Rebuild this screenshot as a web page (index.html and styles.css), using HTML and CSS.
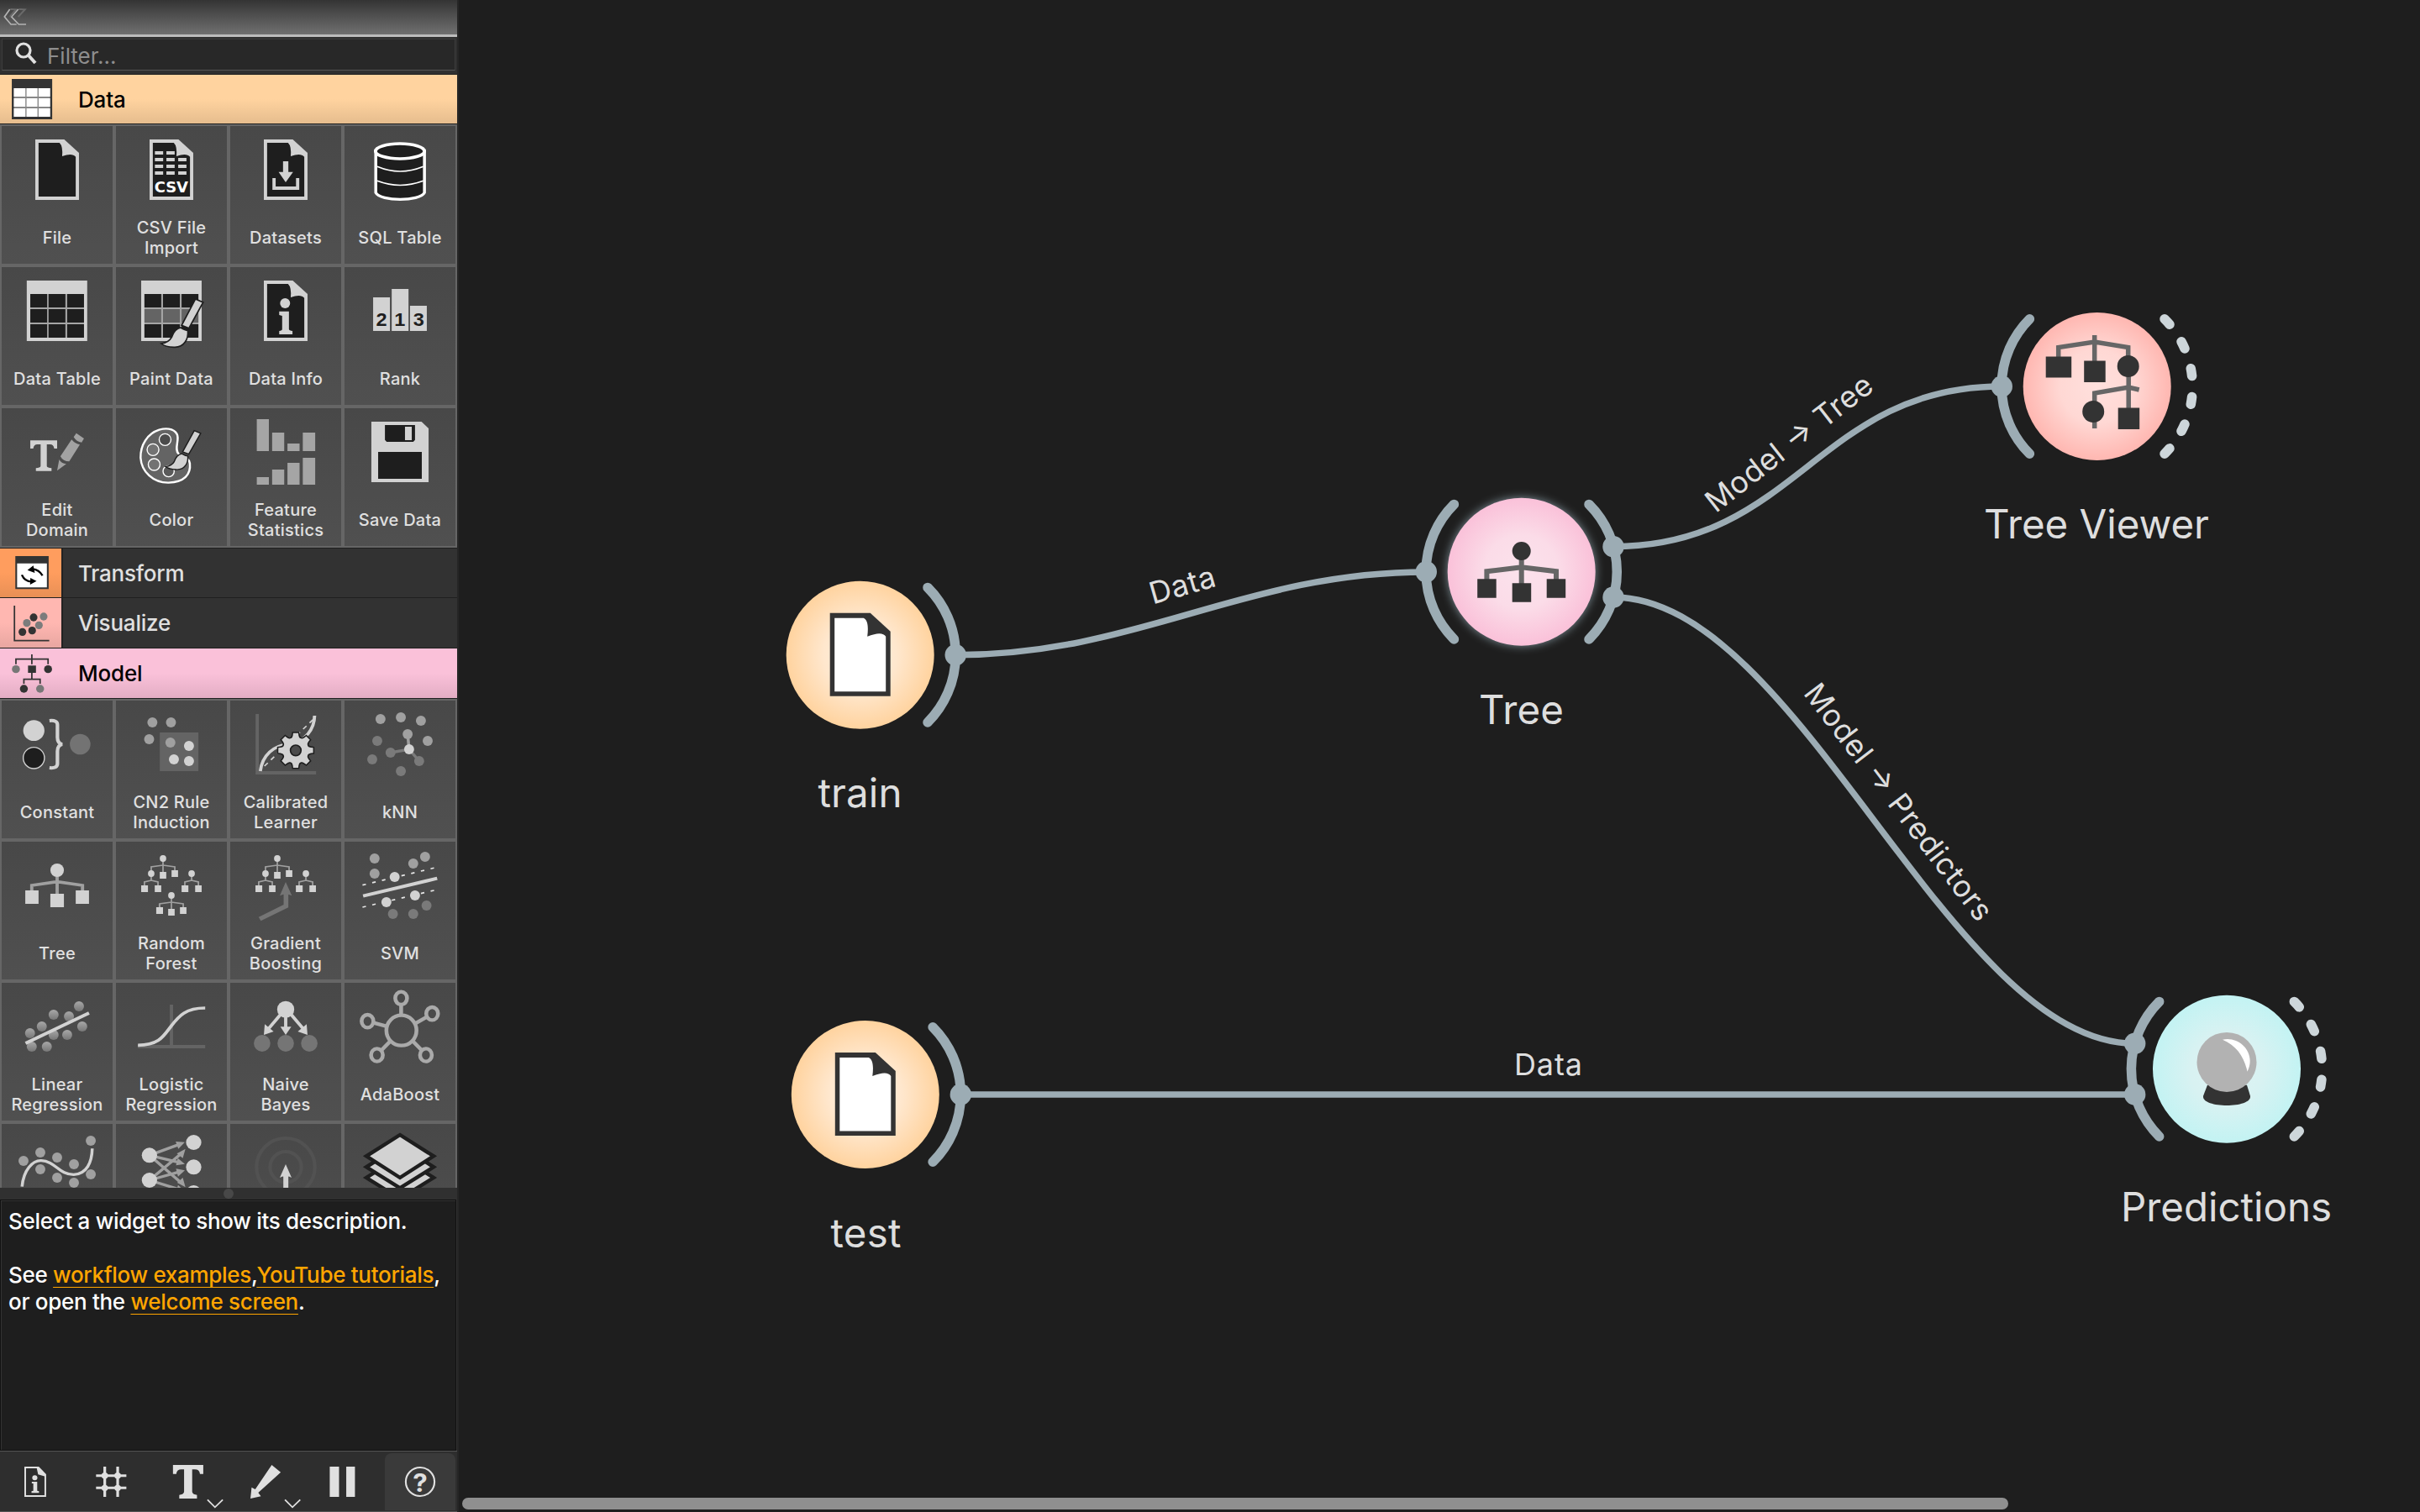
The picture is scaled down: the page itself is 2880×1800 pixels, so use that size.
FILE: index.html
```html
<!DOCTYPE html>
<html lang="en">
<head>
<meta charset="utf-8">
<title>Workflow</title>
<link rel="stylesheet" href="styles.css">
</head>
<body>
<svg class="defs" width="0" height="0">
  <defs>
    <g id="doc"><path class="lt" d="M120 48H218L268 96V264H120Z"/><path class="dk" d="M131 60H202Q214 72 211 108Q245 95 257 110V252H131Z"/></g>
    <g id="brush"><path class="lt ol" d="M663 138L689 150L641 242L616 232Z"/><path class="lt ol" d="M613 240Q628 250 637 250C640 280 625 312 590 310Q560 309 547 297Q572 294 582 275Q592 244 613 240Z"/></g>
    <g id="minitree"><path class="wire" d="M553 72V116M513 112V96L553 90L593 96V110"/><ellipse class="lt" cx="553" cy="66" rx="11" ry="12"/><path class="lt" d="M542 114h22v24h-22zM582 108h22v24h-22z"/></g>
    <g id="twig"><path class="wire" d="M513 128V145M490 164V150L513 144L536 150V164"/><ellipse class="lt" cx="513" cy="120" rx="11" ry="12"/><path class="lt" d="M479 162h23v24h-23zM525 162h22v24h-22z"/></g>
    <path id="tooth" d="M-20 -38C-12 -44 -10 -50 -9 -62H9C10 -50 12 -44 20 -38Z"/>
    <path id="slab" d="M577 1032H678V1064H667Q665 1048 650 1048H641V1128Q642 1137 657 1139V1152H598V1139Q613 1137 614 1128V1048H605Q590 1048 588 1064H577Z"/>
    <linearGradient id="dot" x2="0" y2="1"><stop offset="0" stop-color="#a8a8a8"/><stop offset="1" stop-color="#777"/></linearGradient>
  </defs>
</svg>
<div class="app">
<aside class="dock">
  <header class="dock-title"><svg width="40" height="41" viewBox="0 0 114 123"><path d="M32 33L13 60L36 87H56M62 33L38 60L64 87H90" fill="none" stroke="#b4b4b4" stroke-width="5"/><path d="M34 33L54 34L32 60M64 33L86 34L62 60" fill="none" stroke="#6a6a6a" stroke-width="6"/></svg></header>
  <div class="filter-wrap"><div class="filter"><svg width="30" height="30" viewBox="0 0 30 30"><circle cx="12" cy="12" r="8" fill="none" stroke="#e0e0e0" stroke-width="3.2"/><path d="M17.500 17.500L26 27" stroke="#e0e0e0" stroke-width="4"/></svg><span>Filter...</span></div></div>

  <div class="tab open data"><svg class="tab-icon" viewBox="0 267 208 174" preserveAspectRatio="none"><path fill="#333" d="M40 282h137v144h-137z"/><path fill="#888" d="M47 315h123v102h-123z"/><path fill="#fff" d="M47 315h39v30h-39zM90 315h37v30h-37zM131 315h39v30h-39zM47 351h39v30h-39zM90 351h37v30h-37zM131 351h39v30h-39zM47 387h39v30h-39zM90 387h37v30h-37zM131 387h39v30h-39z"/></svg><span>Data</span></div>
  <div class="grid first">
    <div class="tile"><svg viewBox="6 0 376 318" preserveAspectRatio="none"><use href="#doc"/></svg><span>File</span></div>
    <div class="tile"><svg viewBox="6 0 376 318" preserveAspectRatio="none"><use href="#doc"/><path class="lt" d="M138 90h28v12h-28zM177 90h28v12h-28zM138 114h28v12h-28zM177 114h28v12h-28zM217 114h28v12h-28zM138 138h28v12h-28zM177 138h28v12h-28zM217 138h28v12h-28zM138 162h28v12h-28zM177 162h28v12h-28zM217 162h28v12h-28z"/><text class="csv" x="136" y="238" textLength="115" lengthAdjust="spacingAndGlyphs">CSV</text></svg><span>CSV File<br>Import</span></div>
    <div class="tile"><svg viewBox="6 0 376 318" preserveAspectRatio="none"><use href="#doc"/><path class="lt" d="M185 126h18v38h16L194 201L170 164h15zM149 186h11v30h69v-30h11v42h-91z"/></svg><span>Datasets</span></div>
    <div class="tile"><svg viewBox="1169 450 376 318" preserveAspectRatio="none"><path class="dk" d="M1275 540V688C1290 720 1425 720 1440 688V540Z" stroke="#fff" stroke-width="10"/><ellipse class="dk" cx="1357" cy="540" rx="83" ry="27" stroke="#fff" stroke-width="11"/><path d="M1280 595Q1357 629 1436 595M1280 646Q1357 677 1436 646" fill="none" stroke="#fff" stroke-width="5"/></svg><span>SQL Table</span></div>

    <div class="tile"><svg viewBox="6 24 376 318" preserveAspectRatio="none"><path class="lt" d="M91 72h205v216h-205z"/><path fill="#a5a5a5" d="M103 120h182v156h-182z"/><path class="dk" d="M103 120h57v48h-57zM165 120h57v48h-57zM228 120h57v48h-57zM103 174h57v48h-57zM165 174h57v48h-57zM228 174h57v48h-57zM103 228h57v48h-57zM165 228h57v48h-57zM228 228h57v48h-57z"/></svg><span>Data Table</span></div>
    <div class="tile"><svg viewBox="393.500 24 376 318" preserveAspectRatio="none"><path class="lt" d="M479 72h205v216h-205z"/><path fill="#a5a5a5" d="M490 120h183v156h-183z"/><path class="dk" d="M490 120h57v48h-57zM553 120h57v48h-57zM616 120h57v48h-57zM490 228h57v48h-57zM553 228h57v48h-57zM616 228h57v48h-57z"/><path fill="#646464" d="M490 174h57v48h-57zM553 174h57v48h-57zM616 174h57v48h-57z"/><use href="#brush"/></svg><span>Paint Data</span></div>
    <div class="tile"><svg viewBox="6 0 376 318" preserveAspectRatio="none"><use href="#doc"/><ellipse class="lt" cx="192" cy="129" rx="17" ry="18"/><path class="lt" d="M172 158H205V221Q206 227 217 228V240H172V228Q182 227 182 221V174L172 171Z"/></svg><span>Data Info</span></div>
    <div class="tile"><svg viewBox="1169 24 376 318" preserveAspectRatio="none"><path class="lt" d="M1266 132h57v120h-57zM1329 102h57v150h-57zM1391 162h57v90h-57z"/><text class="rank" x="1276" y="234">2</text><text class="rank" x="1338" y="234">1</text><text class="rank" x="1402" y="234">3</text></svg><span>Rank</span></div>

    <div class="tile"><svg viewBox="6 528 376 318" preserveAspectRatio="none"><path class="lt" d="M103 643H194V672H184Q182 657 170 657H159V735Q161 741 175 742V752H122V742Q136 741 138 735V657H127Q115 657 113 672H103Z"/><path fill="#a2a2a2" d="M243 640Q255 655 271 658L235 718Q214 718 205 700ZM259 617L285 636L277 650Q260 648 250 631ZM201 711Q208 726 225 727L194 751Z"/></svg><span>Edit<br>Domain</span></div>
    <div class="tile"><svg viewBox="393.500 528 376 318" preserveAspectRatio="none"><path fill="#646464" stroke="#fff" stroke-width="7" d="M607 692C588 675 611 640 600 620C588 598 560 599 540 605C500 618 476 660 477 705C480 755 520 795 572 794C625 792 648 765 644 725C642 705 622 702 607 692Z"/><g fill="#737373" stroke="#fff" stroke-width="4"><ellipse cx="560" cy="640" rx="20" ry="21" fill="#4b4b4b"/><ellipse cx="519" cy="676" rx="20" ry="21"/><ellipse cx="523" cy="729" rx="20" ry="21"/><ellipse cx="572" cy="753" rx="19" ry="20" fill="#5a5a5a"/></g><use href="#brush" transform="translate(102 496) scale(.84 .81)"/></svg><span>Color</span></div>
    <div class="tile"><svg viewBox="781 528 376 318" preserveAspectRatio="none"><path fill="#a5a5a5" d="M871 567h41v114h-41zM923 615h41v66h-41zM975 654h41v27h-41zM1027 615h42v66h-42zM871 774h41v27h-41zM923 747h41v54h-41zM975 723h41v78h-41zM1027 705h42v96h-42z"/></svg><span>Feature<br>Statistics</span></div>
    <div class="tile"><svg viewBox="1169 528 376 318" preserveAspectRatio="none"><path class="lt" d="M1260 576H1430L1454 600V792H1260Z"/><path class="dk" d="M1306 588H1408V641L1402 648H1312L1306 641ZM1283 684h148v96h-148z"/><path class="lt" d="M1374 594h23v48h-23z"/></svg><span>Save Data</span></div>
  </div>

  <div class="tab"><svg class="tab-icon transform" viewBox="0 40 208 174" preserveAspectRatio="none"><path fill="#333" d="M52 67h113v118H52z"/><path fill="#fff" d="M58 93h101v86H58z"/><path d="M144 137Q133 115 110 113M74 134Q84 158 107 158" fill="none" stroke="#000" stroke-width="7"/><path d="M93 117L113 101L118 127ZM124 156L102 169L103 145Z"/></svg><span>Transform</span></div>
  <div class="tab tall"><svg class="tab-icon visualize" viewBox="0 216 208 177" preserveAspectRatio="none"><path d="M49 243V368H167" fill="none" stroke="#333" stroke-width="5"/><g fill="#333"><ellipse cx="114" cy="285" rx="13" ry="14"/><ellipse cx="76" cy="337" rx="13" ry="14"/><ellipse cx="109" cy="332" rx="13" ry="14"/></g><g fill="#7c7c7c"><ellipse cx="148" cy="282" rx="13" ry="14"/><ellipse cx="91" cy="305" rx="13" ry="14"/><ellipse cx="132" cy="313" rx="13" ry="14"/></g></svg><span>Visualize</span></div>
  <div class="tab open model"><svg class="tab-icon" viewBox="0 396 208 177" preserveAspectRatio="none"><path d="M54 452V434H163V452M108 417V452M108 482V506M81 522V506H136V522" fill="none" stroke="#333" stroke-width="5"/><path fill="#333" d="M95 457h27v26H95z"/><g fill="#333"><ellipse cx="163" cy="470" rx="13.500" ry="14"/><ellipse cx="81" cy="540" rx="13.500" ry="14"/></g><g fill="#777"><ellipse cx="54" cy="470" rx="13.500" ry="14"/><ellipse cx="136" cy="540" rx="13.500" ry="14"/></g></svg><span>Model</span></div>
  <div class="grid clipped">
    <div class="tile"><svg viewBox="6 582 376 318" preserveAspectRatio="none"><ellipse class="lt" cx="115" cy="689" rx="36" ry="37"/><ellipse class="dk" cx="115" cy="787" rx="36" ry="38" stroke="#d2d2d2" stroke-width="4"/><path fill="none" stroke="#d2d2d2" stroke-width="12" d="M168 654Q195 651 195 668V713Q195 734 211 738Q195 742 195 763V807Q195 825 168 822"/><ellipse fill="#737373" cx="272" cy="738" rx="35" ry="37"/></svg><span>Constant</span></div>
    <div class="tile"><svg viewBox="393.500 582 376 318" preserveAspectRatio="none"><path fill="#646464" d="M542 696h131v138H542z"/><g fill="#a0a0a0"><ellipse cx="517" cy="660" rx="17" ry="18"/><ellipse cx="580" cy="660" rx="17" ry="18"/><ellipse cx="506" cy="720" rx="17" ry="18"/><ellipse cx="578" cy="732" rx="17" ry="18"/></g><g class="lt"><ellipse cx="641" cy="744" rx="17" ry="18"/><ellipse cx="590" cy="792" rx="17" ry="18"/><ellipse cx="641" cy="798" rx="17" ry="18"/></g></svg><span>CN2 Rule<br>Induction</span></div>
    <div class="tile"><svg viewBox="781 582 376 318" preserveAspectRatio="none"><path fill="#646464" d="M867 630H878V834H1072V846H867Z"/><path d="M897 816L1062 650" fill="none" stroke="#d2d2d2" stroke-width="5" stroke-dasharray="16 15"/><path d="M883 834C890 775 930 743 975 738C1040 730 1066 680 1067 636" fill="none" stroke="#d2d2d2" stroke-width="11"/><g transform="translate(1003 760) scale(.95 1)"><g fill="#1e1e1e" stroke="#1e1e1e" stroke-width="9"><circle r="46"/><use href="#tooth"/><use href="#tooth" transform="rotate(45)"/><use href="#tooth" transform="rotate(90)"/><use href="#tooth" transform="rotate(135)"/><use href="#tooth" transform="rotate(180)"/><use href="#tooth" transform="rotate(225)"/><use href="#tooth" transform="rotate(270)"/><use href="#tooth" transform="rotate(315)"/></g><g class="lt"><circle r="46"/><use href="#tooth"/><use href="#tooth" transform="rotate(45)"/><use href="#tooth" transform="rotate(90)"/><use href="#tooth" transform="rotate(135)"/><use href="#tooth" transform="rotate(180)"/><use href="#tooth" transform="rotate(225)"/><use href="#tooth" transform="rotate(270)"/><use href="#tooth" transform="rotate(315)"/></g><circle r="19" fill="#4b4b4b" stroke="#1e1e1e" stroke-width="5"/></g></svg><span>Calibrated<br>Learner</span></div>
    <div class="tile"><svg viewBox="1169 582 376 318" preserveAspectRatio="none"><path d="M1325 768L1388 756L1422 798" fill="none" stroke="#7a7a7a" stroke-width="10"/><path d="M1388 756L1383 702" stroke="#a0a0a0" stroke-width="10"/><g fill="#a0a0a0"><ellipse cx="1291" cy="648" rx="17" ry="18"/><ellipse cx="1360" cy="642" rx="17" ry="18"/><ellipse cx="1428" cy="654" rx="17" ry="18"/><ellipse cx="1451" cy="726" rx="17" ry="18"/><ellipse cx="1383" cy="702" rx="17" ry="18"/></g><g fill="#7a7a7a"><ellipse cx="1280" cy="726" rx="17" ry="18"/><ellipse cx="1325" cy="768" rx="17" ry="18"/><ellipse cx="1263" cy="792" rx="17" ry="18"/><ellipse cx="1422" cy="798" rx="17" ry="18"/><ellipse cx="1360" cy="834" rx="17" ry="18"/></g><ellipse class="lt" cx="1388" cy="756" rx="17" ry="18"/></svg><span>kNN</span></div>

    <div class="tile"><svg viewBox="6 6 376 318" preserveAspectRatio="none"><path d="M194 130V194M108 184V162L194 149L280 162V184" fill="none" stroke="#a0a0a0" stroke-width="11"/><ellipse class="lt" cx="194" cy="108" rx="23" ry="24"/><path class="lt" d="M86 180h45v48H86zM171 192h46v48h-46zM257 180h45v48h-45z"/></svg><span>Tree</span></div>
    <div class="tile"><svg viewBox="393.500 6 376 318" preserveAspectRatio="none"><use href="#minitree"/><use href="#twig"/><use href="#twig" x="137"/><use href="#minitree" x="28.500" y="132"/><path class="wire" d="M541 228V244"/><path class="lt" d="M530 240h23v24h-23z"/></svg><span>Random<br>Forest</span></div>
    <div class="tile"><svg viewBox="781 6 376 318" preserveAspectRatio="none"><use href="#minitree" x="387.500"/><use href="#twig" x="387.500"/><use href="#twig" x="524.500"/><path d="M881 282L970 236V190" fill="none" stroke="#757575" stroke-width="16"/><path fill="#757575" d="M969 150L949 199Q969 188 990 199Z"/></svg><span>Gradient<br>Boosting</span></div>
    <div class="tile"><svg viewBox="1169 6 376 318" preserveAspectRatio="none"><path d="M1230 161L1480 98M1230 240L1480 178" stroke="#e6e6e6" stroke-width="5" stroke-dasharray="12 22"/><path d="M1232 200L1483 137" stroke="#d2d2d2" stroke-width="12"/><g fill="#a0a0a0"><ellipse cx="1271" cy="66" rx="17" ry="18"/><ellipse cx="1271" cy="120" rx="17" ry="18"/><ellipse cx="1402" cy="84" rx="17" ry="18"/><ellipse cx="1442" cy="60" rx="17" ry="18"/></g><g class="lt"><ellipse cx="1339" cy="132" rx="17" ry="18"/><ellipse cx="1408" cy="198" rx="17" ry="18"/><ellipse cx="1311" cy="222" rx="17" ry="18"/></g><g fill="#7a7a7a"><ellipse cx="1333" cy="264" rx="17" ry="18"/><ellipse cx="1402" cy="264" rx="17" ry="18"/><ellipse cx="1447" cy="234" rx="17" ry="18"/></g></svg><span>SVM</span></div>

    <div class="tile"><svg viewBox="6 510 376 318" preserveAspectRatio="none"><g fill="url(#dot)"><ellipse cx="268" cy="594" rx="17" ry="18"/><ellipse cx="182" cy="624" rx="17" ry="18"/><ellipse cx="234" cy="630" rx="17" ry="18"/><ellipse cx="142" cy="666" rx="17" ry="18"/><ellipse cx="102" cy="690" rx="17" ry="18"/><ellipse cx="279" cy="666" rx="17" ry="18"/><ellipse cx="182" cy="696" rx="17" ry="18"/><ellipse cx="228" cy="696" rx="17" ry="18"/><ellipse cx="108" cy="738" rx="17" ry="18"/><ellipse cx="159" cy="738" rx="17" ry="18"/></g><path d="M87 726L302 618" stroke="#d2d2d2" stroke-width="11"/></svg><span>Linear<br>Regression</span></div>
    <div class="tile"><svg viewBox="393.500 510 376 318" preserveAspectRatio="none"><path fill="#646464" d="M576 588h11v144h109v12H468v-12h108z"/><path d="M468 733C540 733 555 700 581 664S630 600 696 600" fill="none" stroke="#d2d2d2" stroke-width="11"/></svg><span>Logistic<br>Regression</span></div>
    <div class="tile"><svg viewBox="781 510 376 318" preserveAspectRatio="none"><g fill="#757575"><ellipse cx="889" cy="726" rx="28" ry="30"/><ellipse cx="969" cy="726" rx="28" ry="30"/><ellipse cx="1049" cy="726" rx="28" ry="30"/></g><path d="M951 624L909 676M969 627V672M988 624L1030 676" stroke="#d2d2d2" stroke-width="11"/><path class="lt" d="M895 696L898 658L928 684ZM951 667H988L969 696ZM1043 696L1010 684L1040 658Z"/><ellipse class="lt" cx="969" cy="605" rx="29" ry="30"/></svg><span>Naive<br>Bayes</span></div>
    <div class="tile"><svg viewBox="1169 510 376 318" preserveAspectRatio="none"><g fill="none" stroke="#aaa" stroke-width="13"><ellipse cx="1362" cy="680" rx="51" ry="54"/><ellipse cx="1361" cy="565" rx="20" ry="23"/><ellipse cx="1466" cy="620" rx="20" ry="23"/><ellipse cx="1445" cy="768" rx="20" ry="23"/><ellipse cx="1279" cy="768" rx="20" ry="23"/><ellipse cx="1247" cy="647" rx="20" ry="23"/><path d="M1361 590V626M1448 632L1408 656M1430 750L1400 718M1295 750L1325 718M1268 653L1310 665"/></g></svg><span>AdaBoost</span></div>

    <div class="tile"><svg viewBox="6 1014 376 318" preserveAspectRatio="none"><g fill="#a0a0a0"><ellipse cx="137" cy="1116" rx="17" ry="18"/><ellipse cx="80" cy="1146" rx="17" ry="18"/><ellipse cx="194" cy="1134" rx="17" ry="18"/><ellipse cx="308" cy="1074" rx="17" ry="18"/><ellipse cx="137" cy="1176" rx="17" ry="18"/><ellipse cx="251" cy="1158" rx="17" ry="18"/><ellipse cx="194" cy="1206" rx="17" ry="18"/><ellipse cx="308" cy="1194" rx="17" ry="18"/><ellipse cx="251" cy="1224" rx="17" ry="18"/></g><path d="M75 1238C80 1180 110 1144 140 1145C188 1147 200 1195 250 1195C295 1193 312 1150 313 1102" fill="none" stroke="#d2d2d2" stroke-width="10"/></svg></div>
    <div class="tile"><svg viewBox="393.500 1014 376 318" preserveAspectRatio="none"><path d="M507 1126L608 1087M507 1126L605 1151M507 1126L615 1225M507 1215L615 1120M507 1215L605 1186M507 1215L605 1247" stroke="#a0a0a0" stroke-width="10"/><path fill="#a0a0a0" d="M627 1079L596 1077L605 1103ZM627 1157L597 1162L603 1136ZM629 1240L601 1224L620 1206ZM629 1103L620 1136L600 1120ZM627 1180L597 1174L604 1202ZM627 1255L597 1260L604 1232Z"/><g class="lt"><ellipse cx="507" cy="1126" rx="26" ry="27"/><ellipse cx="507" cy="1215" rx="26" ry="27"/><ellipse cx="657" cy="1080" rx="26" ry="27"/><ellipse cx="657" cy="1168" rx="26" ry="27"/><ellipse cx="657" cy="1260" rx="26" ry="27"/></g></svg></div>
    <div class="tile"><svg viewBox="781 1014 376 318" preserveAspectRatio="none"><g fill="none" stroke="#525252" stroke-width="12"><ellipse cx="969" cy="1168" rx="99" ry="103"/><ellipse cx="969" cy="1168" rx="53" ry="55"/></g><path class="lt" d="M969 1158L989 1206Q980 1200 978 1202V1260H961V1202Q958 1200 949 1206Z"/></svg></div>
    <div class="tile"><svg viewBox="1169 1014 376 318" preserveAspectRatio="none"><g class="lt" stroke="#1e1e1e" stroke-width="13"><path d="M1357 1130L1471 1206L1357 1281L1243 1206Z"/><path d="M1357 1091L1471 1168L1357 1243L1243 1168Z"/><path d="M1357 1053L1471 1129L1357 1206L1243 1129Z"/></g></svg></div>
  </div>

  <div class="splitter"><i></i></div>
  <div class="help"><p>Select a widget to show its description.</p><p>See <a>workflow examples</a>,<a>YouTube tutorials</a>,<br>or open the <a>welcome screen</a>.</p></div>
  <div class="toolbar">
    <svg viewBox="0 990 256.500 204" preserveAspectRatio="none"><path d="M84 1041H128L151 1066V1143H84Z" fill="none" stroke="#e0e0e0" stroke-width="5.500"/><path class="tb" d="M122 1041H130L152 1066L151 1073L127 1066Z"/><ellipse class="tb" cx="116" cy="1078" rx="8.500" ry="9"/><path class="tb" d="M106 1092H124V1124L130 1126V1132H105V1126L111 1124V1098H106Z"/></svg>
    <svg viewBox="256.500 990 256.500 204" preserveAspectRatio="none"><path d="M348 1038V1146M391 1038V1146M319 1070H420M319 1114H420" stroke="#e0e0e0" stroke-width="9"/><g class="tb"><circle cx="348" cy="1070" r="11"/><circle cx="391" cy="1070" r="11"/><circle cx="348" cy="1114" r="11"/><circle cx="391" cy="1114" r="11"/></g></svg>
    <svg viewBox="513 990 256.500 204" preserveAspectRatio="none"><use class="tb" href="#slab"/><path d="M692 1156L717 1183L743 1156" fill="none" stroke="#e0e0e0" stroke-width="5"/></svg>
    <svg viewBox="769.500 990 256.500 204" preserveAspectRatio="none"><path class="tb" d="M905 1032L935 1058L860 1131L869 1144L834 1152L838 1112L850 1119Z"/><path d="M949 1156L974 1183L1000 1156" fill="none" stroke="#e0e0e0" stroke-width="5"/></svg>
    <svg viewBox="1026 990 256.500 204" preserveAspectRatio="none"><path class="tb" d="M1100 1038h31v108h-31zM1155 1038h29v108h-29z"/></svg>
    <svg class="on" viewBox="1282 990 236 204" preserveAspectRatio="none"><ellipse cx="1400" cy="1092" rx="48" ry="51" fill="none" stroke="#e0e0e0" stroke-width="6"/><text class="q" x="1400" y="1127" text-anchor="middle">?</text></svg>
  </div>
</aside>

<main class="canvas">
<svg class="scheme" viewBox="546 0 2334 1800">
  <defs>
    <radialGradient id="gd"><stop offset="0" stop-color="#fff3e4"/><stop offset=".5" stop-color="#ffe7cd"/><stop offset="1" stop-color="#ffd39f"/></radialGradient>
    <radialGradient id="gm"><stop offset="0" stop-color="#fbe2ec"/><stop offset=".5" stop-color="#fbdce8"/><stop offset="1" stop-color="#fac1d9"/></radialGradient>
    <radialGradient id="gv"><stop offset="0" stop-color="#ffe0dd"/><stop offset=".5" stop-color="#ffd8d4"/><stop offset="1" stop-color="#ffb7b1"/></radialGradient>
    <radialGradient id="ge"><stop offset="0" stop-color="#e0f3f3"/><stop offset=".5" stop-color="#d8f2f2"/><stop offset="1" stop-color="#c3f3f3"/></radialGradient>
    <filter id="halo" x="-30%" y="-30%" width="160%" height="160%"><feGaussianBlur stdDeviation="5.5"/></filter>
    <path id="right" d="M80.300 -80.300A113.500 113.500 0 0 1 80.300 80.300"/>
    <path id="left" d="M-80.300 -80.300A113.500 113.500 0 0 0 -80.300 80.300"/>
    <g id="page"><path fill="#333" d="M-36 -50H12L36 -28V49H-36Z"/><path fill="#fff" d="M-30.500 -44H4C9 -42 10 -34 8.500 -22Q26 -29 30.500 -22V43.500H-30.500Z"/></g>
  </defs>
  <g class="link">
    <path d="M1137 779.700C1355 779.700 1479.300 681 1697.300 681"/>
    <path d="M1920 650.700C2138 650.700 2164.300 460 2382.300 460"/>
    <path d="M1920 711C2140 711 2320.700 1242.300 2540.700 1242.300"/>
    <path d="M1143 1303H2540.700"/>
  </g>
  <g class="link-text">
    <text transform="translate(1375 718.700) rotate(-16)" x="-3" textLength="80">Data</text>
    <text transform="translate(2044 609.700) rotate(-37.900)" x="-3" textLength="241">Model → Tree</text>
    <text transform="translate(2147.700 828.700) rotate(52.700)" x="-4" textLength="344">Model → Predictors</text>
    <text x="1802" y="1280.300" textLength="81">Data</text>
  </g>
  <g transform="translate(1023.700 779.700)"><circle r="88" fill="url(#gd)"/><use href="#page"/><use class="arc" href="#right"/><circle class="port" cx="113.500" r="12.700"/></g>
  <g transform="translate(1029.800 1303)"><circle r="88" fill="url(#gd)"/><use href="#page"/><use class="arc" href="#right"/><circle class="port" cx="113.500" r="12.700"/></g>
  <g transform="translate(1810.700 680.700)"><circle r="88" fill="#7d8d95" filter="url(#halo)"/><circle r="88" fill="url(#gm)"/><path d="M0 -16V16M-41.300 10V-.500L0 -5.500L41.300 -.500V10" fill="none" stroke="#666" stroke-width="6"/><g fill="#333"><circle cy="-24.700" r="11"/><path d="M-52.500 8.500h22.500v22.500h-22.500zM-11 13.500h22.500V36H-11zM30 8.500h22.500v22.500H30z"/></g><use class="arc" href="#right"/><use class="arc" href="#left"/><g class="port"><circle cx="-113.400" r="12.700"/><circle cx="109.300" cy="-30" r="12.700"/><circle cx="109.300" cy="30.300" r="12.700"/></g></g>
  <g transform="translate(2495.700 460)"><circle r="88" fill="url(#gv)"/><path d="M-3 -61V-29M-46 -34V-46.500L-3 -53L37 -46.500V-34M37.500 -12V26M-3 50V8L37.500 1L50 4" fill="none" stroke="#666" stroke-width="5.500"/><g fill="#333"><path d="M-61 -35.500h30.500V-10.500H-61zM-15.500 -30.500H10V-5H-15.500zM25 25.500h25.500V51H25z"/><circle cx="37" cy="-24" r="13"/><circle cx="-4.500" cy="30" r="13"/></g><use class="arc" href="#left"/><use class="arc dashed" href="#right"/><circle class="port" cx="-113.400" r="12.700"/></g>
  <g transform="translate(2650 1272.700)"><circle r="88" fill="url(#ge)"/><path fill="#333" d="M-23 19H24L28 32C30 47 -30 47 -28 32Z"/><circle cy="-8.300" r="35.500" fill="#b2b2b2"/><path fill="#fff" d="M-5 -35C14 -40 36 -20 24.500 3C21 -14 12 -28 -5 -35Z"/><use class="arc" href="#left"/><use class="arc dashed" href="#right"/><g class="port"><circle cx="-109.300" cy="-30.400" r="12.700"/><circle cx="-109.300" cy="30.300" r="12.700"/></g></g>
  <g class="name">
    <text x="973.500" y="961" textLength="100">train</text>
    <text x="988.500" y="1484.500" textLength="84">test</text>
    <text x="1760" y="862" textLength="101">Tree</text>
    <text x="2361" y="641" textLength="268">Tree Viewer</text>
    <text x="2524" y="1454" textLength="251">Predictions</text>
  </g>
</svg>
<div class="hscroll"></div>
</main>
</div>
</body>
</html>
```
FILE: styles.css
```css
* { box-sizing: border-box; }
body { margin: 0; background: #1e1e1e; font-family: Inter, "Liberation Sans", sans-serif; color: #e0e0e0; }
.defs { position: absolute; }
.app { display: flex; width: 2880px; height: 1800px; overflow: hidden; }

.dock { width: 546px; height: 1800px; flex: none; display: flex; flex-direction: column; background: #303030; border-right: 2px solid #262626; }
.dock-title { height: 44px; flex: none; background: linear-gradient(#343434, #707070); border-bottom: 3px solid #bdbdbd; }
.dock-title svg { display: block; }
.filter-wrap { height: 45px; flex: none; padding: 2px 2px 5px; border-bottom: 1px solid #1f1f1f; }
.filter { height: 38px; display: flex; align-items: center; gap: 10px; padding-left: 13px; background: #282828; border: 1px solid #3c3c3c; border-bottom-color: #555; font-size: 26px; color: #8e8e8e; }
.filter svg { position: relative; top: -2px; }
.filter span { position: relative; top: 1px; }

.tab { height: 59px; flex: none; display: flex; align-items: center; background: #323232; border-bottom: 1px solid #1f1f1f; font-size: 26px; font-weight: 500; letter-spacing: -.2px; }
.tab.tall, .tab.model { height: 60px; }
.tab-icon { width: 73px; height: 100%; flex: none; }
.tab span { margin-left: 20px; }
.open { color: #000; }
.data { background: linear-gradient(#ffd39f 50%, #e6bd8e); }
.model { background: linear-gradient(#fac1d9 50%, #e3adc4); }
.transform { background: linear-gradient(#ff9d5e 50%, #e88f55); box-shadow: 2px 0 #222; }
.visualize { background: linear-gradient(#ffb7b1 50%, #e8a6a1); box-shadow: 2px 0 #222; }

.grid { flex: none; display: grid; grid-template-columns: repeat(4, 132px); grid-auto-rows: 164px; gap: 4px; padding: 2px; background: #666; }
.first { border-bottom: 1px solid #1f1f1f; }
.clipped { height: 582px; overflow: hidden; }
.tile { display: flex; flex-direction: column; background: linear-gradient(#484848, #505050); overflow: hidden; }
.tile svg { width: 132px; height: 106px; flex: none; display: block; }
.tile span { height: 54px; display: flex; align-items: center; justify-content: center; text-align: center; font-size: 20px; line-height: 24px; font-weight: 500; letter-spacing: .25px; white-space: nowrap; }
.lt { fill: #d2d2d2; }
.dk { fill: #1e1e1e; }
.ol { stroke: #1e1e1e; stroke-width: 5px; }
.wire { fill: none; stroke: #a0a0a0; stroke-width: 5px; }
.csv { font: bold 55px "DejaVu Sans", sans-serif; fill: #fff; }
.rank { font: bold 67px "Liberation Sans", sans-serif; fill: #1e1e1e; }

.splitter { height: 14px; flex: none; display: flex; justify-content: center; align-items: center; background: #303030; }
.splitter i { width: 12px; height: 12px; border-radius: 50%; background: #484848; }
.help { height: 299px; flex: none; margin-right: 1px; padding: 9px 9px; background: #1e1e1e; border: 1px solid #111; box-shadow: inset 1px 1px #333; color: #fff; font-size: 26px; font-weight: 500; line-height: 32px; letter-spacing: -.3px; white-space: nowrap; }
.help p { margin: 0 0 32px; }
.help a { color: #ffa500; text-decoration: underline; text-decoration-thickness: 1px; text-underline-offset: 5px; }
.toolbar { height: 73px; display: flex; padding-top: 2px; border-top: 1px solid #555; border-bottom: 1px solid #555; background: #2e2e2e; }
.toolbar svg { width: 91.6px; height: 68px; flex: none; }
.toolbar .on { width: 84px; background: #3a3a3a; border-radius: 8px 8px 0 0; }
.tb { fill: #e0e0e0; }
.q { font: bold 88px Inter, sans-serif; fill: #e0e0e0; }

.canvas { flex: 1; position: relative; background: #1e1e1e; }
.scheme { display: block; width: 2334px; height: 1800px; }
.link { fill: none; stroke: #9cacb4; stroke-width: 7.4px; }
.link-text { font-size: 36px; fill: #dedede; }
.name { font-size: 47.5px; fill: #dedede; }
.arc { fill: none; stroke: #9cacb4; stroke-width: 11.5px; stroke-linecap: round; }
.dashed { stroke: #cdd6da; stroke-dasharray: 9 24.86; }
.port { fill: #9cacb4; }
.hscroll { position: absolute; left: 4px; top: 1783px; width: 1840px; height: 14px; border-radius: 7px; background: #8f8f8f; }
```
